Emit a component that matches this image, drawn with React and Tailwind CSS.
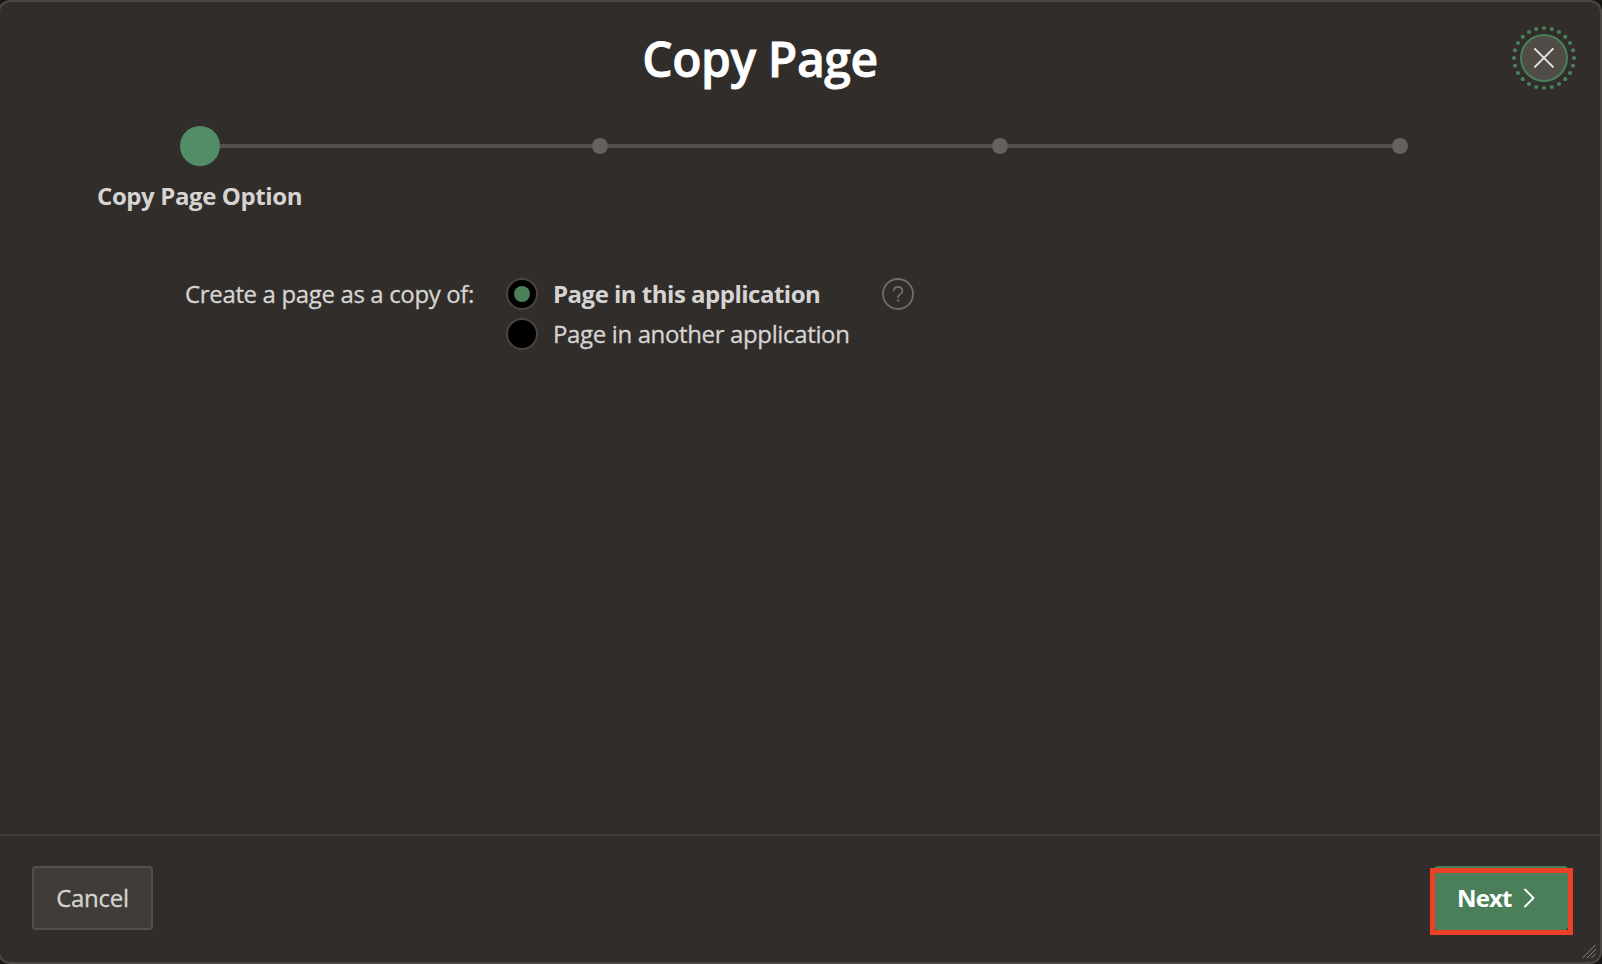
const STEP_COUNT = 4;

function RingDots() {
  const dots = Array.from({ length: 24 }, (_, i) => {
    const a = (i * Math.PI) / 12;
    return [33 + 30 * Math.sin(a), 33 - 30 * Math.cos(a)];
  });
  return (
    <svg className="pointer-events-none absolute -top-[11px] -left-[11px] size-[66px]" viewBox="0 0 66 66" fill="#4a8059">
      {dots.map(([x, y], i) => (
        <circle key={i} cx={x} cy={y} r="2.1" />
      ))}
    </svg>
  );
}

function Header() {
  return (
    <header className="flex h-28 items-center pr-8">
      <h1 className="flex-1 pt-px text-center text-5xl font-semibold tracking-[-0.42px] text-white [-webkit-text-stroke:0.8px_white]">Copy Page</h1>
      <button aria-label="Close" className="relative flex size-12 items-center justify-center rounded-full border-2 border-[#47825a] bg-[#524c48]">
        <svg className="size-5" viewBox="0 0 20 20" fill="none" stroke="#e6e3e0" strokeWidth="2" strokeLinecap="round">
          <path d="M.9.9 18.9 18.9M18.9.9.9 18.9" />
        </svg>
        <RingDots />
      </button>
    </header>
  );
}

function Progress() {
  return (
    <div className="pt-3">
      <div className="flex h-10 items-center pr-48 pl-[180px]">
        <span className="size-10 rounded-full bg-[#538d65]" />
        {Array.from({ length: STEP_COUNT - 1 }, (_, i) => (
          <span key={i} className={i === 0 ? "flex w-[388px] items-center" : "flex w-[400px] items-center"}>
            <span className="h-1 flex-1 bg-[#544f4b]" />
            <span className="size-4 rounded-full bg-[#67615d]" />
          </span>
        ))}
      </div>
      <p className="mt-2.5 w-[399px] text-center text-2xl leading-10 font-bold tracking-[-0.4px]">Copy Page Option</p>
    </div>
  );
}

function Radio({ checked }) {
  return (
    <span className="mr-[15px] flex size-8 items-center justify-center rounded-full border-2 border-[#484543] bg-black">
      {checked && <span className="size-4 rounded-full bg-[#4a8059]" />}
    </span>
  );
}

function Options() {
  return (
    <div className="mt-[58px] flex text-2xl leading-10">
      <span className="w-[474px] text-right tracking-[-0.36px] [-webkit-text-stroke:0.3px_#d6d4d2]">Create a page as a copy of:</span>
      <div className="ml-8 w-[344px]">
        <label className="flex h-10 items-center font-bold tracking-[-0.5px]">
          <Radio checked />
          Page in this application
        </label>
        <label className="flex h-10 items-center tracking-[-0.36px] [-webkit-text-stroke:0.3px_#d6d4d2]">
          <Radio />
          Page in another application
        </label>
      </div>
      <svg className="mt-1 ml-8 size-8" viewBox="0 0 32 32" fill="none" stroke="#716c69" strokeWidth="1.8" strokeLinecap="round">
        <circle cx="16" cy="16" r="15" />
        <path d="M11.7 12.6C11.9 10.2 13.7 9 16 9c2.5 0 4.4 1.5 4.4 3.9 0 3.3-4.3 3.3-4.3 6.3" />
        <circle cx="16.1" cy="22.5" r="1.2" fill="#716c69" stroke="none" />
      </svg>
    </div>
  );
}

function Footer() {
  return (
    <footer className="relative mt-auto flex h-32 items-start justify-between border-t-2 border-[#403c39] px-8 pt-[30px] text-2xl">
      <button className="h-16 w-[121px] rounded-sm border-2 border-[#55504c] bg-[#403c38] tracking-[-0.25px] [-webkit-text-stroke:0.3px_#d6d4d2]">Cancel</button>
      <div className="relative">
        <button className="flex h-16 w-[134px] items-center rounded-sm bg-[#4a7f59] pl-[23px] font-bold tracking-[-0.85px] text-white">
          Next
          <svg className="ml-3 h-5 w-3" viewBox="0 0 12 20" fill="none" stroke="currentColor" strokeWidth="1.8" strokeLinecap="round" strokeLinejoin="round">
            <path d="M1 1.5 9.5 10 1 18.5" />
          </svg>
        </button>
        <span className="absolute top-0.5 -left-1 h-[67px] w-[143px] border-5 border-[#eb4127]" />
      </div>
      <svg className="absolute right-1 bottom-1 size-4" viewBox="0 0 16 16" stroke="#8a8683" strokeWidth="1">
        <path d="M2.5 16 16 2.5M7 16l9-9M11.5 16l4.5-4.5" />
      </svg>
    </footer>
  );
}

export default function App() {
  return (
    <div className="h-[964px] w-[1602px] overflow-hidden bg-[#191716]">
      <main className="-ml-0.5 flex h-full w-[1604px] flex-col rounded-xl border-2 border-[#4b4744] bg-[#312d2a] font-['Open_Sans','Noto_Sans',sans-serif] text-[#d6d4d2]">
        <Header />
        <Progress />
        <Options />
        <Footer />
      </main>
    </div>
  );
}
